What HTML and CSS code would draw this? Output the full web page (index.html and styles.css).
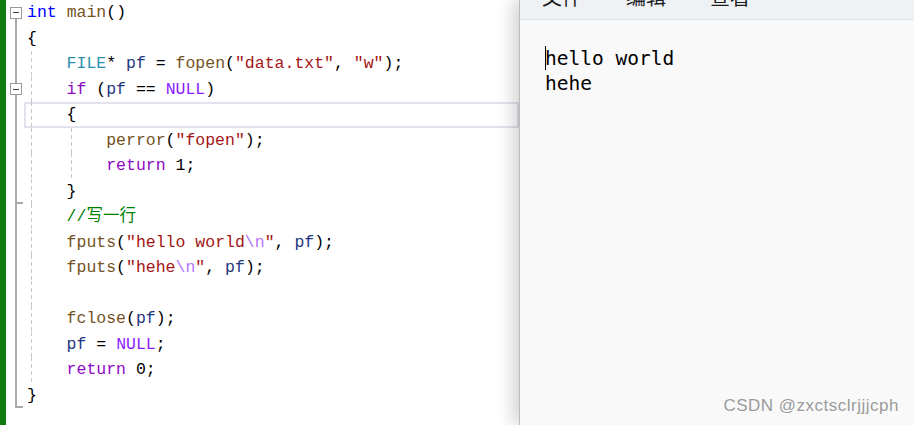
FILE: index.html
```html
<!DOCTYPE html>
<html lang="zh-CN">
<head>
    <meta charset="UTF-8">
    <title>fputs 示例</title>
    <link rel="stylesheet" href="styles.css">
</head>
<body>
    <div class="editor">
        <div class="changes"></div>
        <div class="lines">
            <div class="line">
                <div class="gut fold-start"><span class="box"></span></div>
                <div class="code"><span class="t"><span class="kw">int</span> <span class="fn">main</span>()</span></div>
            </div>
            <div class="line">
                <div class="gut fold"></div>
                <div class="code"><span class="t">{</span></div>
            </div>
            <div class="line">
                <div class="gut fold"></div>
                <div class="code"><span class="ind g"></span><span class="t"><span class="ty">FILE</span>* <span class="var">pf</span> = <span class="fn">fopen</span>(<span class="str">"data.txt"</span>, <span class="str">"w"</span>);</span></div>
            </div>
            <div class="line">
                <div class="gut fold"><span class="box"></span></div>
                <div class="code"><span class="ind g"></span><span class="t"><span class="ctl">if</span> (<span class="var">pf</span> == <span class="mac">NULL</span>)</span></div>
            </div>
            <div class="line current">
                <div class="gut fold"></div>
                <div class="code"><span class="ind g"></span><span class="t">{</span></div>
            </div>
            <div class="line">
                <div class="gut fold"></div>
                <div class="code"><span class="ind g"></span><span class="ind g"></span><span class="t"><span class="fn">perror</span>(<span class="str">"fopen"</span>);</span></div>
            </div>
            <div class="line">
                <div class="gut fold"></div>
                <div class="code"><span class="ind g"></span><span class="ind g"></span><span class="t"><span class="ctl">return</span> 1;</span></div>
            </div>
            <div class="line">
                <div class="gut fold tick"></div>
                <div class="code"><span class="ind g"></span><span class="t">}</span></div>
            </div>
            <div class="line">
                <div class="gut fold"></div>
                <div class="code"><span class="ind g"></span><span class="t"><span class="cm">//写一行</span></span></div>
            </div>
            <div class="line">
                <div class="gut fold"></div>
                <div class="code"><span class="ind g"></span><span class="t"><span class="fn">fputs</span>(<span class="str">"hello world<span class="esc">\n</span>"</span>, <span class="var">pf</span>);</span></div>
            </div>
            <div class="line">
                <div class="gut fold"></div>
                <div class="code"><span class="ind g"></span><span class="t"><span class="fn">fputs</span>(<span class="str">"hehe<span class="esc">\n</span>"</span>, <span class="var">pf</span>);</span></div>
            </div>
            <div class="line">
                <div class="gut fold"></div>
                <div class="code"><span class="ind g"></span><span class="t"></span></div>
            </div>
            <div class="line">
                <div class="gut fold"></div>
                <div class="code"><span class="ind g"></span><span class="t"><span class="fn">fclose</span>(<span class="var">pf</span>);</span></div>
            </div>
            <div class="line">
                <div class="gut fold"></div>
                <div class="code"><span class="ind g"></span><span class="t"><span class="var">pf</span> = <span class="mac">NULL</span>;</span></div>
            </div>
            <div class="line">
                <div class="gut fold"></div>
                <div class="code"><span class="ind g"></span><span class="t"><span class="ctl">return</span> 0;</span></div>
            </div>
            <div class="line">
                <div class="gut fold tick"></div>
                <div class="code"><span class="t">}</span></div>
            </div>
        </div>
    </div>

    <div class="notepad">
        <div class="menu">
            <span>文件</span>
            <span>编辑</span>
            <span>查看</span>
        </div>
        <div class="doc">
            <div><span class="caret"></span>hello world</div>
            <div>hehe</div>
        </div>
        <div class="mark">CSDN @zxctsclrjjjcph</div>
    </div>
</body>
</html>
```

FILE: styles.css
```css
body {
    margin: 0;
    height: 425px;
    overflow: hidden;
    display: flex;
    background-color: #fff;
    font-family: 'Liberation Mono', monospace;
}
.editor {
    width: 519px;
    flex: none;
    display: flex;
}
.changes {
    width: 6px;
    flex: none;
    background-color: #0f7b0f;
}
.lines {
    flex: 1;
    display: flex;
    flex-direction: column;
}
.line {
    display: flex;
    height: 25.5px;
}
.gut {
    width: 18px;
    flex: none;
    display: flex;
    align-items: center;
    padding-left: 4px;
    box-sizing: border-box;
}
.gut.fold {
    background: linear-gradient(#a9a9a9, #a9a9a9) 9px 0 / 2px 100% no-repeat;
}
.gut.fold-start {
    background: linear-gradient(#a9a9a9, #a9a9a9) 9px 100% / 2px 50% no-repeat;
}
.gut.tick {
    background:
        linear-gradient(#a9a9a9, #a9a9a9) 9px 100% / 8px 2px no-repeat,
        linear-gradient(#a9a9a9, #a9a9a9) 9px 0 / 2px 100% no-repeat;
}
.box {
    width: 12px;
    height: 12px;
    box-sizing: border-box;
    border: 1px solid #9a9a9a;
    background: linear-gradient(#444, #444) center / 6px 1px no-repeat, #fff;
}
.code {
    flex: 1;
    display: flex;
    padding-left: 3px;
    font-size: 16.5px;
}
.current .code {
    box-shadow: inset 0 0 0 2px #e2e2ec;
}
.ind {
    width: 4ch;
    flex: none;
}
.ind.g {
    background: repeating-linear-gradient(to bottom, #c9c9c9 0 4px, transparent 4px 7px) 4px 0 / 1px 100% no-repeat;
}
.t {
    white-space: pre;
    line-height: 25.5px;
    color: #000;
}
.kw { color: #0000ff; }
.fn { color: #74531f; }
.var { color: #1f377f; }
.ty { color: #2b91af; }
.ctl { color: #8f08c4; }
.mac { color: #8a1bff; }
.str { color: #a31515; }
.esc { color: #b776fb; }
.cm {
    color: #008000;
    font-family: 'Liberation Mono', 'Noto Sans CJK SC', monospace;
}
.notepad {
    flex: 1;
    position: relative;
    background-color: #f9f9f9;
    border-left: 1px solid #bcbcbc;
    box-shadow: -6px 0 16px rgba(0, 0, 0, 0.18);
}
.menu {
    height: 19px;
    display: flex;
    gap: 44px;
    padding-left: 22px;
    background-color: #eff2f5;
    border-bottom: 1px solid #e0e3e6;
    overflow: hidden;
}
.menu span {
    font-family: 'Noto Sans CJK SC', sans-serif;
    font-size: 20px;
    line-height: 20px;
    margin-top: -13px;
    color: #1b1b1b;
}
.doc {
    padding: 26px 0 0 25px;
    font-family: 'DejaVu Sans Mono', monospace;
    font-size: 19.5px;
    line-height: 25px;
    color: #000;
}
.caret {
    display: inline-block;
    width: 1px;
    height: 24px;
    margin-right: -1px;
    background-color: #000;
    vertical-align: -5px;
}
.mark {
    position: absolute;
    right: 15px;
    bottom: 9px;
    font-family: 'Liberation Sans', Arial, sans-serif;
    font-size: 17px;
    letter-spacing: 0.5px;
    color: #9a9a9a;
    text-shadow: 0 0 1px #fff;
}
```
